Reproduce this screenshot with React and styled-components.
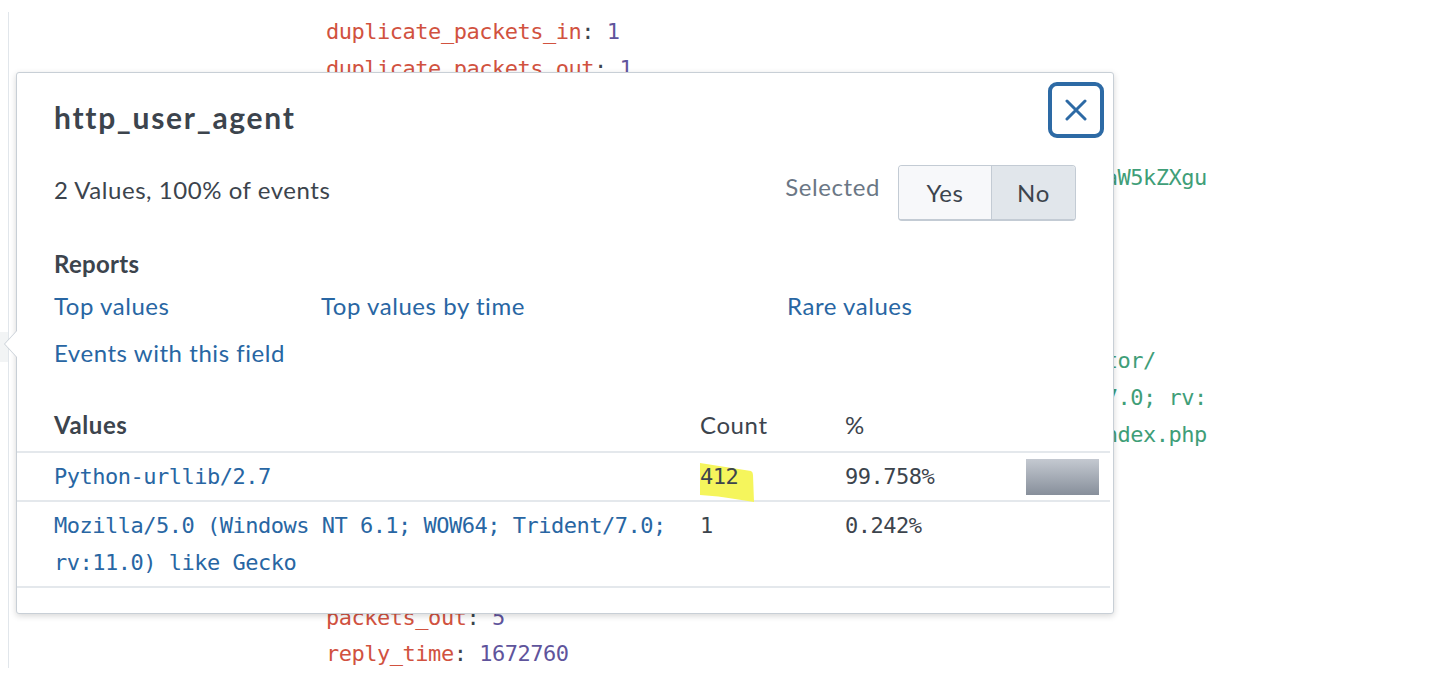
import React from "react";
import styled, { createGlobalStyle } from "styled-components";

const GlobalStyle = createGlobalStyle`
  html, body { margin: 0; padding: 0; background: #fff; }
  body { font-family: Lato, "Open Sans", sans-serif; color: #3c444d; }
`;

const MONO = `"DejaVu Sans Mono", "Liberation Mono", monospace`;

const Page = styled.div`
  position: relative;
  width: 1450px;
  height: 700px;
  display: flex;
  overflow: hidden;
  background: #fff;
`;

const FieldsRail = styled.div`
  width: 8px;
  height: 656px;
  margin-top: 12px;
  border-right: 1px solid #e1e6eb;
  display: flex;
  flex-direction: column;
`;

const RailHighlight = styled.div`
  margin-top: 320px;
  height: 30px;
  background: #f2f4f5;
`;

const EventBody = styled.div`
  padding: 14px 0 0 317px;
  font-family: ${MONO};
  font-size: 22px;
  letter-spacing: -0.48px;
`;

const EventLine = styled.div`
  height: 36.6px;
  line-height: 36.6px;
  white-space: pre;
`;

const Key = styled.span`
  color: #d1523f;
`;
const Colon = styled.span`
  color: #3c444d;
`;
const Val = styled.span`
  color: ${(p) => (p.$num ? "#5f549c" : "#3f9e78")};
`;

const Popover = styled.div`
  position: absolute;
  left: 16px;
  top: 72px;
  width: 1098px;
  height: 542px;
  box-sizing: border-box;
  background: #fff;
  border: 1px solid #c8cfd6;
  border-radius: 3px;
  box-shadow: 0 2px 6px rgba(0, 0, 0, 0.16);
  padding-top: 9px;
`;

const Arrow = styled.div`
  position: absolute;
  left: -13px;
  top: 257px;
  width: 0;
  height: 0;
  border-top: 14px solid transparent;
  border-bottom: 14px solid transparent;
  border-right: 13px solid #c8cfd6;
  &::after {
    content: "";
    position: absolute;
    left: 1px;
    top: -13px;
    border-top: 13px solid transparent;
    border-bottom: 13px solid transparent;
    border-right: 12px solid #fff;
  }
`;

const Header = styled.div`
  display: flex;
  justify-content: space-between;
  align-items: flex-start;
  padding: 0 9px 0 37px;
`;

const Title = styled.h2`
  margin: 18px 0 0;
  font-size: 30px;
  line-height: 34px;
  font-weight: 700;
  letter-spacing: 1.7px;
  color: #3c444d;
`;

const CloseButton = styled.button`
  width: 56px;
  height: 56px;
  box-sizing: border-box;
  border: 4px solid #2d6aa5;
  border-radius: 9px;
  background: #fff;
  padding: 0;
  display: flex;
  align-items: center;
  justify-content: center;
  cursor: pointer;
`;

const SummaryRow = styled.div`
  display: flex;
  justify-content: space-between;
  align-items: flex-start;
  padding: 0 37px;
  margin-top: 27px;
`;

const SummaryText = styled.div`
  margin-top: 10px;
  font-size: 24px;
  line-height: 30px;
  letter-spacing: 0.55px;
`;

const SelectedGroup = styled.div`
  display: flex;
  align-items: flex-start;
  gap: 18px;
`;

const SelectedLabel = styled.span`
  margin-top: 7px;
  font-size: 24px;
  line-height: 30px;
  color: #6b7785;
  letter-spacing: 0.6px;
`;

const Toggle = styled.div`
  display: flex;
  height: 56px;
  box-sizing: border-box;
  border: 1px solid #c3cbd4;
  border-bottom-width: 2px;
  border-radius: 4px;
  overflow: hidden;
`;

const ToggleOption = styled.button`
  width: ${(p) => p.$w}px;
  border: 0;
  border-left: ${(p) => (p.$first ? "0" : "1px solid #c3cbd4")};
  background: ${(p) => (p.$active ? "#e1e6eb" : "#f7f8fa")};
  font-family: Lato, sans-serif;
  font-size: 24px;
  letter-spacing: 0.6px;
  color: #3c444d;
  display: flex;
  align-items: center;
  justify-content: center;
  padding: 0;
`;

const SectionTitle = styled.div`
  margin-top: 28px;
  padding-left: 37px;
  font-size: 24px;
  line-height: 30px;
  font-weight: 700;
  letter-spacing: 0.3px;
`;

const LinkGrid = styled.div`
  display: grid;
  grid-template-columns: 267px 466px auto;
  row-gap: 17px;
  margin-top: 12px;
  padding-left: 37px;
`;

const ReportLink = styled.a`
  font-size: 24px;
  line-height: 30px;
  color: #2866a3;
  letter-spacing: 0.55px;
  text-decoration: none;
  white-space: nowrap;
`;

const Table = styled.div`
  margin: 32px 3px 0 0;
  border-bottom: 2px solid #e4e8ec;
`;

const TableRow = styled.div`
  display: grid;
  grid-template-columns: 683px 145px 181px 1fr;
  align-items: start;
  padding: ${(p) => (p.$head ? "10px 0 11px" : "5px 0")};
  border-top: ${(p) => (p.$head ? "0" : "2px solid #e4e8ec")};
`;

const HeadCell = styled.div`
  font-size: 24px;
  line-height: 30px;
  font-weight: ${(p) => (p.$bold ? 700 : 400)};
  letter-spacing: 0.6px;
  padding-left: ${(p) => p.$pad || 0}px;
`;

const MonoCell = styled.div`
  position: relative;
  font-family: ${MONO};
  font-size: 22px;
  letter-spacing: -0.5px;
  line-height: 37px;
  color: ${(p) => (p.$link ? "#2866a3" : "#3c444d")};
  padding-left: ${(p) => p.$pad || 0}px;
  padding-right: ${(p) => p.$padr || 0}px;
`;

const CellText = styled.span`
  position: relative;
  z-index: 1;
`;

const Marker = styled.svg`
  position: absolute;
  left: -1px;
  top: 5px;
  z-index: 0;
`;

const BarCell = styled.div`
  align-self: center;
  display: flex;
`;

const Bar = styled.div`
  height: 36px;
  background: linear-gradient(#c4c9d1, #878f9b);
`;

const lines = [
  ["duplicate_packets_in", "1", true],
  ["duplicate_packets_out", "1", true],
  ["http_comment", "HTTP/1.1 200 OK"],
  ["http_content_type", "text/html; charset=utf-8"],
  ["src_content", "dXNlcm5hbWU9YWRtaW4mcGFzc3dkPWJhdG1hbiZyZXR1cm49aW5kZXgu"],
  ["http_method", "POST"],
  ["dest_ip", "192.168.250.70"],
  ["dest_mac", "00:0C:29:C4:02:7E"],
  ["dest_port", "80", true],
  ["http_referrer", "http://imreallynotbatman.com/joomla/administrator/"],
  ["http_user_agent", "Mozilla/5.0 (Windows NT 6.1; WOW64; Trident/7.0; rv:"],
  ["referrer", "http://imreallynotbatman.com/joomla/administrator/index.php"],
  ["missing_packets_in", "0", true],
  ["missing_packets_out", "0", true],
  ["network_interface", "eth1"],
  ["packets_in", "4", true],
  ["packets_out", "5", true],
  ["reply_time", "1672760", true],
];

const rows = [
  { value: "Python-urllib/2.7", count: "412", pct: "99.758%", bar: 73, mark: true },
  { value: "Mozilla/5.0 (Windows NT 6.1; WOW64; Trident/7.0; rv:11.0) like Gecko", count: "1", pct: "0.242%", bar: 0 },
];

export default function App() {
  return (
    <>
      <GlobalStyle />
      <Page>
        <FieldsRail>
          <RailHighlight />
        </FieldsRail>
        <EventBody>
          {lines.map(([k, v, num]) => (
            <EventLine key={k}>
              <Key>{k}</Key>
              <Colon>: </Colon>
              <Val $num={num}>{v}</Val>
            </EventLine>
          ))}
        </EventBody>

        <Popover>
          <Arrow />
          <Header>
            <Title>http_user_agent</Title>
            <CloseButton aria-label="Close">
              <svg width="22" height="22" viewBox="0 0 22 22">
                <path d="M2 2 L20 20 M20 2 L2 20" stroke="#2d6aa5" strokeWidth="3" strokeLinecap="round" />
              </svg>
            </CloseButton>
          </Header>

          <SummaryRow>
            <SummaryText>2 Values, 100% of events</SummaryText>
            <SelectedGroup>
              <SelectedLabel>Selected</SelectedLabel>
              <Toggle>
                <ToggleOption $first $w={92}>Yes</ToggleOption>
                <ToggleOption $active $w={84}>No</ToggleOption>
              </Toggle>
            </SelectedGroup>
          </SummaryRow>

          <SectionTitle>Reports</SectionTitle>
          <LinkGrid>
            <ReportLink href="#">Top values</ReportLink>
            <ReportLink href="#">Top values by time</ReportLink>
            <ReportLink href="#">Rare values</ReportLink>
            <ReportLink href="#">Events with this field</ReportLink>
          </LinkGrid>

          <Table>
            <TableRow $head>
              <HeadCell $bold $pad={37}>Values</HeadCell>
              <HeadCell>Count</HeadCell>
              <HeadCell>%</HeadCell>
              <div />
            </TableRow>
            {rows.map((r) => (
              <TableRow key={r.value}>
                <MonoCell $link $pad={37} $padr={20}>{r.value}</MonoCell>
                <MonoCell>
                  {r.mark && (
                    <Marker width="56" height="40" viewBox="0 0 56 40">
                      <path d="M1 0 L52 8 Q54 9 54 12 L55 39 L36 36 Q20 33 1 32 Z" fill="#f5f55c" />
                    </Marker>
                  )}
                  <CellText>{r.count}</CellText>
                </MonoCell>
                <MonoCell>{r.pct}</MonoCell>
                <BarCell>{r.bar > 0 && <Bar style={{ width: `${r.bar}px` }} />}</BarCell>
              </TableRow>
            ))}
          </Table>
        </Popover>
      </Page>
    </>
  );
}
